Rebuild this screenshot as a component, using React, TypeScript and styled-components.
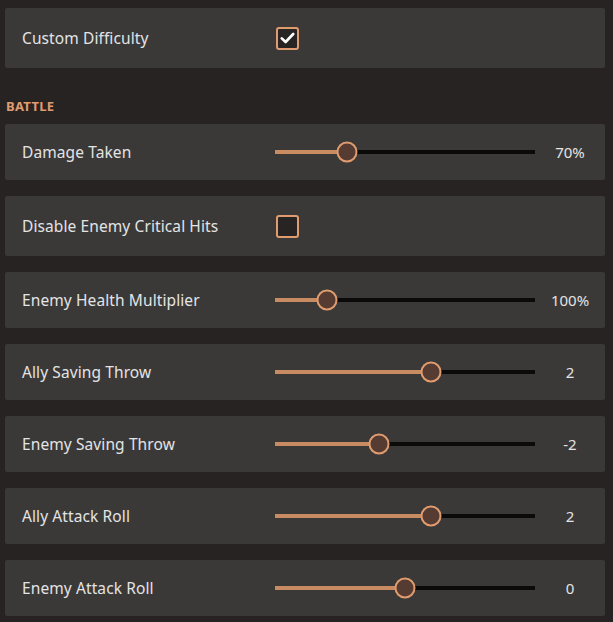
import React from "react";
import styled, { createGlobalStyle } from "styled-components";

const colors = {
  page: "#272322",
  row: "#3a3938",
  text: "#e4e4e4",
  accent: "#e09c6f",
  fill: "#c98b62",
  track: "#0b0a0a",
  thumb: "#553b32",
  boxInner: "#272423",
};

const GlobalStyle = createGlobalStyle`
  html, body {
    margin: 0;
    padding: 0;
    background: ${colors.page};
  }
  body {
    font-family: "Noto Sans", "Open Sans", sans-serif;
    -webkit-font-smoothing: antialiased;
  }
`;

const Page = styled.div`
  display: flex;
  flex-direction: column;
  gap: 16px;
  padding: 8px 8px 0 5px;
  width: 613px;
  box-sizing: border-box;
`;

const SectionTitle = styled.div`
  color: ${colors.accent};
  font-size: 13px;
  font-weight: 700;
  letter-spacing: 0.3px;
  line-height: 18px;
  padding: 13px 0 0 1px;
  margin-bottom: -7px;
`;

const Row = styled.div<{ $tall?: boolean }>`
  display: grid;
  grid-template-columns: 253px 260px 70px;
  align-items: center;
  height: ${({ $tall }) => ($tall ? "60px" : "56px")};
  padding-left: 17px;
  background: ${colors.row};
  border-radius: 2px;
  box-sizing: border-box;
`;

const Label = styled.span`
  color: ${colors.text};
  font-size: 15.5px;
  letter-spacing: 0.1px;
`;

const Value = styled.span`
  color: ${colors.text};
  font-size: 15px;
  text-align: center;
`;

const Box = styled.span`
  width: 23px;
  height: 23px;
  margin-left: 1px;
  box-sizing: border-box;
  border: 2px solid ${colors.accent};
  border-radius: 3px;
  background: ${colors.boxInner};
  display: flex;
  align-items: center;
  justify-content: center;
`;

const Track = styled.div`
  position: relative;
  height: 4px;
  background: ${colors.track};
`;

const Fill = styled.div`
  position: absolute;
  left: 0;
  top: 0;
  bottom: 0;
  background: ${colors.fill};
`;

const Thumb = styled.div`
  position: absolute;
  top: 50%;
  width: 21px;
  height: 21px;
  box-sizing: border-box;
  border: 2px solid ${colors.accent};
  border-radius: 50%;
  background: ${colors.thumb};
  transform: translate(-50%, -50%);
`;

const Check = () => (
  <svg width="15" height="12" viewBox="0 0 15 12">
    <path
      d="M1.8 6.4 L5.6 10 L13.2 2"
      fill="none"
      stroke="#ffffff"
      strokeWidth="2.6"
      strokeLinecap="round"
      strokeLinejoin="round"
    />
  </svg>
);

const CheckRow = ({ label, checked }: { label: string; checked: boolean }) => (
  <Row $tall>
    <Label>{label}</Label>
    <Box>{checked && <Check />}</Box>
  </Row>
);

const SliderRow = ({ label, pos, value }: { label: string; pos: number; value: string }) => (
  <Row>
    <Label>{label}</Label>
    <Track>
      <Fill style={{ width: `${pos * 100}%` }} />
      <Thumb style={{ left: `${pos * 100}%` }} />
    </Track>
    <Value>{value}</Value>
  </Row>
);

const sliders = [
  { label: "Damage Taken", pos: 72 / 260, value: "70%" },
  { label: "Enemy Health Multiplier", pos: 52 / 260, value: "100%" },
  { label: "Ally Saving Throw", pos: 0.6, value: "2" },
  { label: "Enemy Saving Throw", pos: 0.4, value: "-2" },
  { label: "Ally Attack Roll", pos: 0.6, value: "2" },
  { label: "Enemy Attack Roll", pos: 0.5, value: "0" },
];

export default function App() {
  const [first, ...rest] = sliders;
  return (
    <>
      <GlobalStyle />
      <Page>
        <CheckRow label="Custom Difficulty" checked />
        <SectionTitle>BATTLE</SectionTitle>
        <SliderRow {...first} />
        <CheckRow label="Disable Enemy Critical Hits" checked={false} />
        {rest.map((s) => (
          <SliderRow key={s.label} {...s} />
        ))}
      </Page>
    </>
  );
}
